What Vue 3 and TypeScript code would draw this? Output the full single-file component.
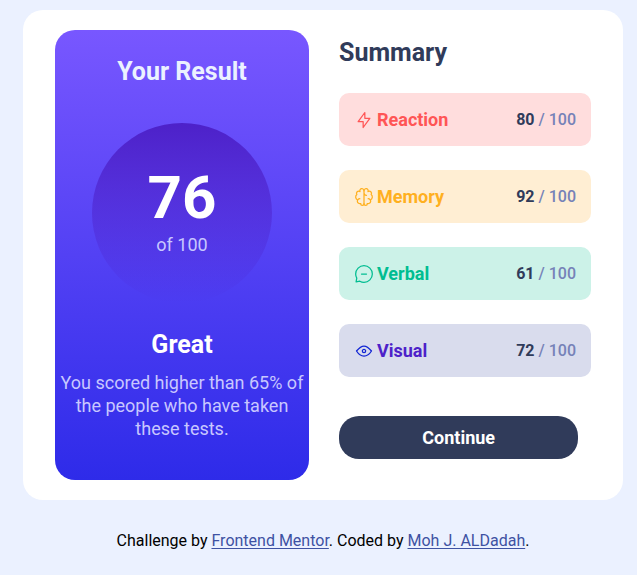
<script setup lang="ts">
interface Category {
  name: string
  score: number
  tone: string
  paths: string[]
}

const categories: Category[] = [
  {
    name: 'Reaction',
    score: 80,
    tone: 'reaction',
    paths: ['M10.833 8.333V2.5l-6.666 9.167h5V17.5l6.666-9.167h-5Z'],
  },
  {
    name: 'Memory',
    score: 92,
    tone: 'memory',
    paths: [
      'M5.833 11.667a2.5 2.5 0 1 0 .834 4.858',
      'M3.553 13.004a3.333 3.333 0 0 1-.728-5.53m.025-.067a2.083 2.083 0 0 1 2.983-2.824m.199.054A2.083 2.083 0 1 1 10 3.75v12.917a1.667 1.667 0 0 1-3.333 0M10 5.833a2.5 2.5 0 0 0 2.5 2.5m1.667 3.334a2.5 2.5 0 1 1-.834 4.858',
      'M16.447 13.004a3.334 3.334 0 0 0 .728-5.53m-.025-.067a2.083 2.083 0 0 0-2.983-2.824m-.199.054A2.083 2.083 0 1 0 10 3.75m3.333 12.917a1.667 1.667 0 0 1-3.333 0',
    ],
  },
  {
    name: 'Verbal',
    score: 61,
    tone: 'verbal',
    paths: [
      'M7.5 10h5M10 18.333A8.333 8.333 0 1 0 1.667 10c0 1.518.406 2.942 1.115 4.167l-.699 3.75 3.75-.699A8.295 8.295 0 0 0 10 18.333Z',
    ],
  },
  {
    name: 'Visual',
    score: 72,
    tone: 'visual',
    paths: [
      'M10 11.667a1.667 1.667 0 1 0 0-3.334 1.667 1.667 0 0 0 0 3.334Z',
      'M17.5 10c-1.574 2.492-4.402 5-7.5 5s-5.926-2.508-7.5-5C4.416 7.632 6.66 5 10 5s5.584 2.632 7.5 5Z',
    ],
  },
]
</script>

<template>
  <div class="page">
    <main class="card">
      <section class="result">
        <h1>Your Result</h1>
        <div class="circle">
          <strong>76</strong>
          <span>of 100</span>
        </div>
        <h2>Great</h2>
        <p>You scored higher than 65% of the people who have taken these tests.</p>
      </section>
      <section class="summary">
        <h2>Summary</h2>
        <ul>
          <li v-for="item in categories" :key="item.name" :class="item.tone">
            <svg viewBox="0 0 20 20" aria-hidden="true">
              <path v-for="d in item.paths" :key="d" :d="d" />
            </svg>
            <span class="name">{{ item.name }}</span>
            <span class="score"><b>{{ item.score }}</b> / 100</span>
          </li>
        </ul>
        <button type="button">Continue</button>
      </section>
    </main>
    <footer>
      Challenge by <a href="#">Frontend Mentor</a>. Coded by <a href="#">Moh J. ALDadah</a>.
    </footer>
  </div>
</template>

<style>
body {
  margin: 0;
  background: #ebf1ff;
}
</style>

<style scoped>
.page {
  padding: 10px 14px 24px 23px;
  font-family: Roboto, "Liberation Sans", sans-serif;
  font-size: 18px;
}

.card {
  display: grid;
  grid-template-columns: 127fr 126fr;
  gap: 30px;
  box-sizing: border-box;
  max-width: 600px;
  margin: 0 auto;
  padding: 20px 32px;
  border-radius: 20px;
  background: #fff;
}

h1,
h2,
p,
ul {
  margin: 0;
}

.result {
  display: flex;
  flex-direction: column;
  align-items: center;
  padding: 26px 4px 40px;
  border-radius: 20px;
  background: linear-gradient(#7857ff, #2e2be9);
  color: #fff;
  text-align: center;
}

h1,
h2 {
  font-size: 25px;
  line-height: 32px;
  font-weight: 700;
}

h1 {
  color: #ebf1ff;
}

.circle {
  display: flex;
  flex-direction: column;
  align-items: center;
  box-sizing: border-box;
  width: 180px;
  height: 180px;
  margin: 35px 0 26px;
  padding-top: 40px;
  border-radius: 50%;
  background: linear-gradient(#4d21c9, rgba(37, 33, 201, 0));
}

.circle strong {
  font-size: 60px;
  line-height: 70px;
  font-weight: 700;
}

.circle span,
.result p {
  color: #c8c7ff;
  line-height: 23px;
}

.result p {
  margin-top: 10px;
}

.summary {
  padding-top: 7px;
  color: #303b5a;
}

ul {
  display: grid;
  gap: 24px;
  margin: 24px 0 39px;
  padding: 0;
  list-style: none;
}

li {
  display: flex;
  align-items: center;
  box-sizing: border-box;
  padding: 15px;
  border-radius: 10px;
  line-height: 23px;
}

svg {
  width: 20px;
  height: 20px;
  margin-right: 3px;
  fill: none;
  stroke: currentColor;
  stroke-width: 1.25;
  stroke-linecap: round;
  stroke-linejoin: round;
}

.name {
  flex: 1;
  font-weight: 700;
}

.score {
  color: #7682b8;
  font-size: 16px;
  font-weight: 500;
}

.score b {
  color: #303b5a;
  font-weight: 700;
}

.reaction {
  background: #ffdddd;
  color: #ff5555;
}

.memory {
  background: #ffeed3;
  color: #ffb01f;
}

.verbal {
  background: #ccf2e8;
  color: #00bd91;
}

.visual {
  background: #d9dced;
  color: #4d21c9;
}

.visual svg {
  color: #1125d4;
}

button {
  display: block;
  width: 95%;
  padding: 10px;
  border: 0;
  border-radius: 20px;
  background: #303b5a;
  color: #fff;
  font: inherit;
  font-weight: 700;
  line-height: 23px;
  cursor: pointer;
}

footer {
  margin-top: 30px;
  font-size: 16px;
  line-height: 21px;
  text-align: center;
  color: #000;
}

a {
  color: #3e52a3;
  text-underline-offset: 2px;
}
</style>
